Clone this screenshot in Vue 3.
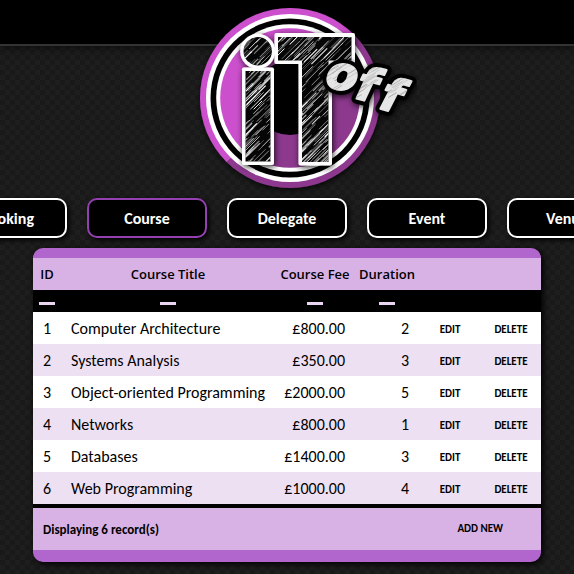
<script setup>
const navItems = ['Booking', 'Course', 'Delegate', 'Event', 'Venue']
const activeItem = 'Course'

const courses = [
  { id: 1, title: 'Computer Architecture', fee: 800, duration: 2 },
  { id: 2, title: 'Systems Analysis', fee: 350, duration: 3 },
  { id: 3, title: 'Object-oriented Programming', fee: 2000, duration: 5 },
  { id: 4, title: 'Networks', fee: 800, duration: 1 },
  { id: 5, title: 'Databases', fee: 1400, duration: 3 },
  { id: 6, title: 'Web Programming', fee: 1000, duration: 4 },
]

const columns = ['ID', 'Course Title', 'Course Fee', 'Duration']

const offLetters = [
  { char: 'o', x: 324, y: 86, turn: 12 },
  { char: 'f', x: 354, y: 98, turn: 14 },
  { char: 'f', x: 378, y: 108, turn: 16 },
]

// Seeded generator, so the chalk strokes are the same on every load
function makeStrokes(seed, count, box, minLen, maxLen, rise) {
  let state = seed
  const next = () => {
    state = (state * 16807) % 2147483647
    return state / 2147483647
  }
  return Array.from({ length: count }, () => {
    const x = box.x + next() * box.w
    const y = box.y + next() * box.h
    const len = minLen + next() * (maxLen - minLen)
    return {
      d: `M${x.toFixed(1)} ${y.toFixed(1)}l${len.toFixed(1)} ${(-len * rise).toFixed(1)}`,
      w: (0.4 + next() * 0.8).toFixed(1),
      o: (0.3 + next() * 0.7).toFixed(2),
    }
  })
}

const chalk = makeStrokes(4271, 520, { x: 228, y: 35, w: 125, h: 145 }, 6, 20, 1)
const shade = makeStrokes(913, 170, { x: 312, y: 58, w: 100, h: 65 }, 6, 16, 0.6)
</script>

<template>
  <div class="page">
    <header class="topbar"></header>

    <a class="logo" href="#" aria-label="iT off">
      <svg viewBox="157 0 260 198" width="260" height="198" aria-hidden="true">
        <defs>
          <linearGradient id="disc" x1="0" y1="0" x2="1" y2="1">
            <stop offset="0.5" stop-color="#cc50cd" />
            <stop offset="0.5" stop-color="#8d398e" />
          </linearGradient>
          <filter id="soft" x="-20%" y="-20%" width="140%" height="140%">
            <feDropShadow dx="1" dy="2" stdDeviation="3" flood-color="#000" flood-opacity="0.8" />
          </filter>
          <clipPath id="mark">
            <circle cx="257.7" cy="51.3" r="14.2" />
            <rect x="245.500" y="71" width="25" height="90.500" />
            <rect x="278" y="37" width="73.500" height="23.500" />
            <rect x="302" y="37" width="26.500" height="125" />
          </clipPath>
          <mask id="letters" maskUnits="userSpaceOnUse" x="300" y="40" width="117" height="100">
            <text
              v-for="(l, i) in offLetters"
              :key="i"
              class="off off-face"
              :x="l.x"
              :y="l.y"
              :transform="`rotate(${l.turn} ${l.x} ${l.y})`"
            >{{ l.char }}</text>
          </mask>
        </defs>

        <g filter="url(#soft)">
          <circle cx="290" cy="98" r="90" fill="url(#disc)" />
        </g>
        <circle cx="290" cy="98" r="84" fill="#fff" />
        <circle cx="290" cy="98" r="79.5" fill="#000" />
        <circle cx="290" cy="98" r="73.8" fill="#fff" />
        <circle cx="290" cy="98" r="69.8" fill="url(#disc)" />
        <circle cx="290" cy="98" r="37" fill="#000" />

        <g filter="url(#soft)" fill="#fff">
          <circle cx="257.7" cy="51.3" r="17.5" />
          <rect x="242" y="67.500" width="32" height="97.500" rx="2" />
          <rect x="274.500" y="33" width="80.500" height="31" rx="2" />
          <rect x="298.500" y="33" width="33.500" height="132.500" rx="2" />
        </g>
        <g clip-path="url(#mark)">
          <rect x="240" y="30" width="120" height="140" fill="#060606" />
          <path
            v-for="(s, i) in chalk"
            :key="i"
            :d="s.d"
            :stroke-width="s.w"
            :stroke-opacity="s.o"
            stroke="#fff"
          />
        </g>

        <g filter="url(#soft)">
          <text
            v-for="(l, i) in offLetters"
            :key="i"
            class="off off-edge"
            :x="l.x"
            :y="l.y"
            :transform="`rotate(${l.turn} ${l.x} ${l.y})`"
          >{{ l.char }}</text>
        </g>
        <g mask="url(#letters)">
          <rect x="310" y="40" width="107" height="90" fill="#e6e6e6" />
          <path
            v-for="(s, i) in shade"
            :key="i"
            :d="s.d"
            :stroke-width="s.w"
            :stroke-opacity="s.o"
            stroke="#aaa"
          />
        </g>
      </svg>
    </a>

    <nav class="menu" aria-label="Main">
      <a
        v-for="item in navItems"
        :key="item"
        href="#"
        class="menu-item"
        :class="{ active: item === activeItem }"
      >{{ item }}</a>
    </nav>

    <main class="panel">
      <table class="grid">
        <colgroup>
          <col class="c-id" />
          <col class="c-title" />
          <col class="c-fee" />
          <col class="c-duration" />
          <col class="c-edit" />
          <col class="c-delete" />
        </colgroup>
        <thead>
          <tr class="headings">
            <th v-for="c in columns" :key="c" scope="col">{{ c }}</th>
            <td colspan="2"></td>
          </tr>
          <tr class="marks">
            <td v-for="c in columns" :key="c"><span class="dash"></span></td>
            <td colspan="2"></td>
          </tr>
        </thead>
        <tbody>
          <tr v-for="course in courses" :key="course.id">
            <td class="id">{{ course.id }}</td>
            <td class="title">{{ course.title }}</td>
            <td class="number">£{{ course.fee.toFixed(2) }}</td>
            <td class="number">{{ course.duration }}</td>
            <td><button type="button" class="action">EDIT</button></td>
            <td><button type="button" class="action">DELETE</button></td>
          </tr>
        </tbody>
      </table>
      <footer class="summary">
        <span>Displaying 6 record(s)</span>
        <button type="button" class="action">ADD NEW</button>
      </footer>
    </main>
  </div>
</template>

<style>
body {
  background: repeating-conic-gradient(#1e1e1e 0 25%, #191919 0 50%) 0 0 / 10px 10px;
}
</style>

<style scoped>
.page {
  display: flex;
  flex-direction: column;
  align-items: center;
  overflow: hidden;
  padding-bottom: 12px;
  font-family: Carlito, Lato, sans-serif;
  color: #000;
}

.topbar {
  box-sizing: border-box;
  width: 100%;
  height: 46px;
  background: #000;
  border-bottom: 2px solid #333;
  box-shadow: 0 2px 8px rgba(0, 0, 0, 0.5);
}

.logo {
  margin-top: -46px;
}

.logo svg {
  display: block;
}

.off {
  font-family: "DejaVu Sans", sans-serif;
  font-size: 46px;
  font-weight: 700;
  font-style: italic;
  stroke-linejoin: round;
}

.off-face {
  fill: #fff;
  stroke: #fff;
  stroke-width: 2px;
}

.off-edge {
  stroke: #000;
  stroke-width: 10px;
}

.menu {
  display: flex;
  justify-content: center;
  gap: 20px;
}

.menu-item {
  box-sizing: border-box;
  flex: none;
  width: 120px;
  height: 40px;
  border: 2px solid #fff;
  border-radius: 10px;
  background: #000;
  box-shadow: 2px 2px 5px #000;
  color: #fff;
  font-size: 16px;
  font-weight: 700;
  line-height: 38px;
  text-align: center;
  text-decoration: none;
}

.menu-item.active {
  border-color: #9440b0;
}

.panel {
  box-sizing: border-box;
  width: 508px;
  max-width: 100%;
  margin-top: 10px;
  border-top: 10px solid #b066cc;
  border-bottom: 12px solid #b066cc;
  border-radius: 10px;
  background: #d8b2e5;
  box-shadow: 2px 2px 6px #000;
  overflow: hidden;
}

.grid {
  width: 100%;
  table-layout: fixed;
  border-collapse: collapse;
  font-size: 16px;
}

.c-id { width: 28px; }
.c-fee { width: 80px; }
.c-duration { width: 64px; }
.c-edit { width: 62px; }
.c-delete { width: 60px; }

.grid th,
.grid td {
  height: 32px;
  padding: 0;
  text-align: center;
  white-space: nowrap;
}

.headings th {
  font-family: "Open Sans", sans-serif;
  font-size: 13px;
  font-weight: 600;
}

.grid .marks td {
  height: 22px;
  background: #000;
  vertical-align: bottom;
}

.dash {
  display: block;
  width: 16px;
  height: 3px;
  margin: 0 auto 7px;
  background: #ead6f2;
}

tbody tr {
  background: #fff;
}

tbody tr:nth-child(even) {
  background: #eee0f3;
}

.grid .title {
  padding-left: 10px;
  text-align: left;
}

.grid .number {
  padding-right: 10px;
  text-align: right;
}

.action {
  display: inline-block;
  padding: 0;
  border: 0;
  background: none;
  color: #000;
  font-family: inherit;
  font-size: 11px;
  font-weight: 700;
  line-height: 16px;
  vertical-align: middle;
  cursor: pointer;
}

.summary {
  display: flex;
  align-items: center;
  justify-content: space-between;
  height: 42px;
  padding: 0 38px 0 10px;
  border-top: 4px solid #000;
  font-size: 13px;
  font-weight: 700;
}
</style>
